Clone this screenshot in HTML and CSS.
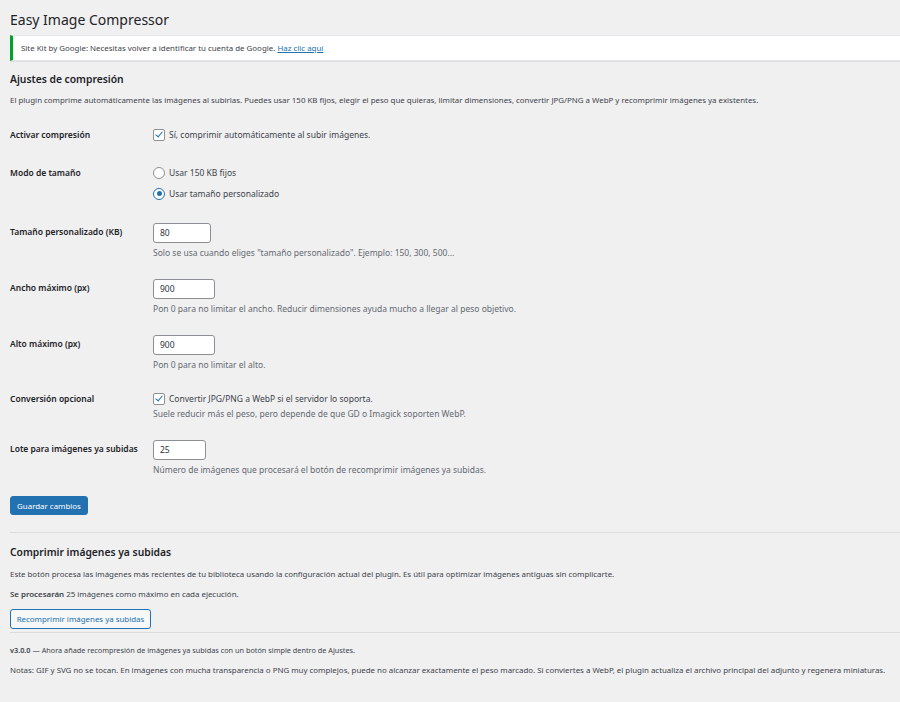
FILE: index.html
```html
<!DOCTYPE html>
<html>

<head>
    <title>Easy Image Compressor</title>
    <link rel="stylesheet" href="styles.css">
</head>

<body>
    <div class="wrap">
        <h1 class="page-title">Easy Image Compressor</h1>

        <div class="notice">
            Site Kit by Google: Necesitas volver a identificar tu cuenta de Google. <a href="#">Haz clic aquí</a>
        </div>

        <h2 class="section-title">Ajustes de compresión</h2>
        <p class="intro">El plugin comprime automáticamente las imágenes al subirlas. Puedes usar 150 KB fijos, elegir el peso que quieras, limitar dimensiones, convertir JPG/PNG a WebP y recomprimir imágenes ya existentes.</p>

        <form class="settings">
            <div class="row">
                <div class="row-label">Activar compresión</div>
                <div class="row-field">
                    <label class="option option-first"><span class="check"></span>Sí, comprimir automáticamente al subir imágenes.</label>
                </div>
            </div>

            <div class="row">
                <div class="row-label">Modo de tamaño</div>
                <div class="row-field">
                    <label class="option"><span class="radio"></span>Usar 150 KB fijos</label>
                    <label class="option option-gap"><span class="radio radio-on"></span>Usar tamaño personalizado</label>
                </div>
            </div>

            <div class="row">
                <div class="row-label label-input">Tamaño personalizado (KB)</div>
                <div class="row-field">
                    <input class="text-input w58" type="text" value="80">
                    <p class="description">Solo se usa cuando eliges "tamaño personalizado". Ejemplo: 150, 300, 500...</p>
                </div>
            </div>

            <div class="row">
                <div class="row-label label-input">Ancho máximo (px)</div>
                <div class="row-field">
                    <input class="text-input w62" type="text" value="900">
                    <p class="description">Pon 0 para no limitar el ancho. Reducir dimensiones ayuda mucho a llegar al peso objetivo.</p>
                </div>
            </div>

            <div class="row">
                <div class="row-label label-input">Alto máximo (px)</div>
                <div class="row-field">
                    <input class="text-input w62" type="text" value="900">
                    <p class="description">Pon 0 para no limitar el alto.</p>
                </div>
            </div>

            <div class="row">
                <div class="row-label label-check">Conversión opcional</div>
                <div class="row-field">
                    <label class="option"><span class="check"></span>Convertir JPG/PNG a WebP si el servidor lo soporta.</label>
                    <p class="description">Suele reducir más el peso, pero depende de que GD o Imagick soporten WebP.</p>
                </div>
            </div>

            <div class="row">
                <div class="row-label label-input">Lote para imágenes ya subidas</div>
                <div class="row-field">
                    <input class="text-input w53" type="text" value="25">
                    <p class="description">Número de imágenes que procesará el botón de recomprimir imágenes ya subidas.</p>
                </div>
            </div>

            <div class="submit">
                <button class="button-primary" type="button">Guardar cambios</button>
            </div>
        </form>

        <hr class="divider">

        <h2 class="section-title section-second">Comprimir imágenes ya subidas</h2>
        <p class="text text-first">Este botón procesa las imágenes más recientes de tu biblioteca usando la configuración actual del plugin. Es útil para optimizar imágenes antiguas sin complicarte.</p>
        <p class="text"><strong>Se procesarán</strong> 25 imágenes como máximo en cada ejecución.</p>
        <button class="button-secondary" type="button">Recomprimir imágenes ya subidas</button>

        <hr class="divider divider-small">

        <p class="small-note"><strong>v3.0.0</strong> — Ahora añade recompresión de imágenes ya subidas con un botón simple dentro de Ajustes.</p>
        <p class="notes">Notas: GIF y SVG no se tocan. En imágenes con mucha transparencia o PNG muy complejos, puede no alcanzar exactamente el peso marcado. Si conviertes a WebP, el plugin actualiza el archivo principal del adjunto y regenera miniaturas.</p>
    </div>
</body>

</html>
```

FILE: styles.css
```css
body {
    margin: 0;
    padding: 0;
    background-color: #f0f0f1;
    color: #3c434a;
    font-family: "Noto Sans", Arial, sans-serif;
    font-size: 7.9px;
    line-height: 14px;
    overflow: hidden;
}

.wrap {
    padding: 0 0 0 10px;
}

.page-title {
    margin: 0;
    padding: 9px 0 0 0;
    font-size: 14px;
    line-height: 22px;
    font-weight: 400;
    color: #1d2327;
}

.notice {
    margin-top: 4px;
    background-color: white;
    border-left: 3px solid #00a32a;
    box-shadow: 0 1px 1px rgba(0, 0, 0, 0.06);
    border-top: 1px solid #e2e4e7;
    border-bottom: 1px solid #e2e4e7;
    padding: 5px 8px 5px 8px;
    color: #3c434a;
}

.notice a {
    color: #2271b1;
}

.section-title {
    margin: 10px 0 0 0;
    font-size: 10.3px;
    line-height: 16px;
    font-weight: 600;
    color: #1d2327;
}

.intro {
    margin: 6px 0 0 0;
}

.settings {
    margin-top: 10px;
    font-size: 8.5px;
}

.row {
    display: grid;
    grid-template-columns: 143px 1fr;
    padding: 9.5px 0;
}

.row-label {
    font-weight: 600;
    color: #1d2327;
    padding-top: 1px;
}

.label-input {
    padding-top: 2px;
}

.label-check {
    padding-top: 1px;
}

.option {
    display: flex;
    align-items: center;
    height: 16px;
}

.option-first {
    margin-bottom: 3px;
}

.option-gap {
    margin-top: 5px;
    margin-bottom: 2px;
}

.check,
.radio {
    width: 10px;
    height: 10px;
    border: 1px solid #8c8f94;
    background-color: white;
    margin-right: 4px;
    position: relative;
    flex-shrink: 0;
}

.check {
    border-radius: 2px;
}

.check::after {
    content: "";
    position: absolute;
    left: 3px;
    top: 0px;
    width: 3px;
    height: 6px;
    border-right: 1.6px solid #2271b1;
    border-bottom: 1.6px solid #2271b1;
    transform: rotate(40deg);
}

.radio {
    border-radius: 50%;
}

.radio-on {
    border-color: #2271b1;
}

.radio-on::after {
    content: "";
    position: absolute;
    left: 2.5px;
    top: 2.5px;
    width: 5px;
    height: 5px;
    border-radius: 50%;
    background-color: #2271b1;
}

.text-input {
    display: block;
    box-sizing: border-box;
    height: 20px;
    padding: 0 6px;
    border: 1px solid #8c8f94;
    border-radius: 3px;
    background-color: white;
    font-family: inherit;
    font-size: 8.5px;
    color: #2c3338;
}

.w58 {
    width: 58px;
}

.w62 {
    width: 62px;
}

.w53 {
    width: 53px;
}

.description {
    margin: 3px 0 0 0;
    color: #646970;
}

.option + .description {
    margin-top: 0;
}

.submit {
    padding-top: 10px;
}

.button-primary {
    display: block;
    background-color: #2271b1;
    border: 1px solid #2271b1;
    border-radius: 3px;
    color: white;
    font-family: inherit;
    font-size: 7.9px;
    height: 19px;
    width: 78px;
    padding: 0;
}

.divider {
    margin: 17px 0 0 0;
    border: 0;
    border-top: 1px solid #dcdcde;
}

.section-second {
    margin-top: 11px;
}

.text {
    margin: 6px 0 0 0;
}

.text-first {
    margin-top: 7px;
}

.text strong {
    font-weight: 600;
}

.button-secondary {
    display: block;
    margin-top: 8px;
    background-color: #f6f7f7;
    border: 1px solid #2271b1;
    border-radius: 3px;
    color: #2271b1;
    font-family: inherit;
    font-size: 7.9px;
    white-space: nowrap;
    height: 20px;
    width: 141px;
    padding: 0;
}

.divider-small {
    margin-top: 3px;
}

.small-note {
    margin: 10px 0 0 0;
    font-size: 7.3px;
}

.small-note strong {
    font-weight: 600;
}

.notes {
    margin: 6px 0 0 0;
}
```
